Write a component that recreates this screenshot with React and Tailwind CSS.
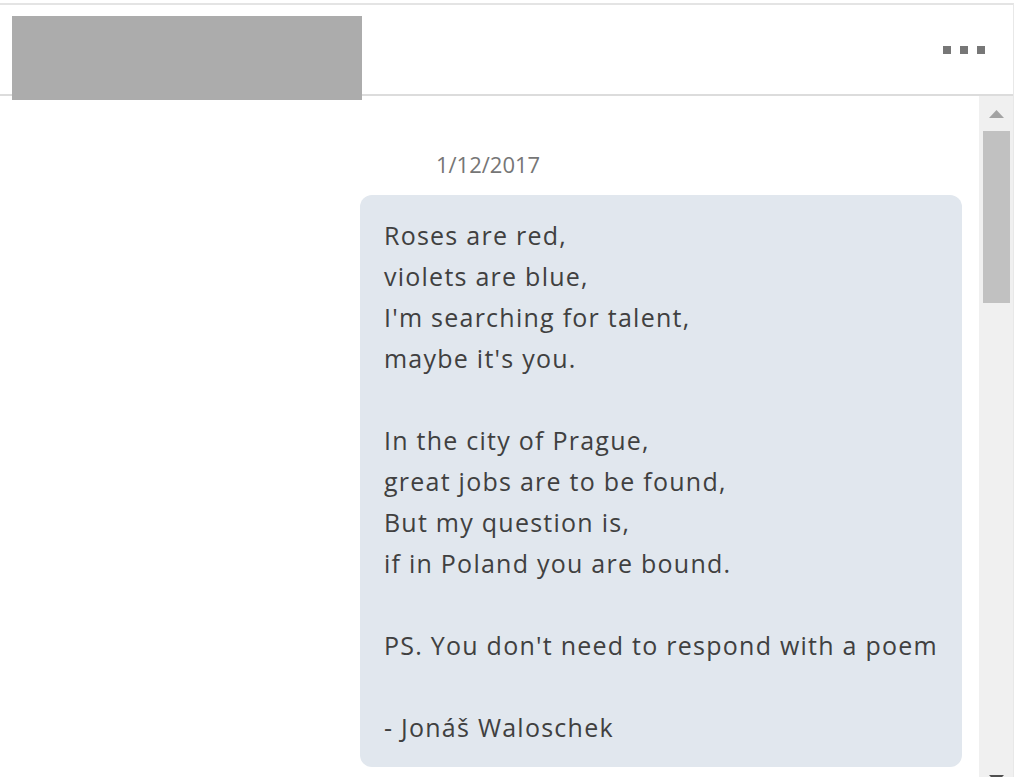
import React from "react";

const poem = `Roses are red,
violets are blue,
I'm searching for talent,
maybe it's you.

In the city of Prague,
great jobs are to be found,
But my question is,
if in Poland you are bound.

PS. You don't need to respond with a poem

- Jonáš Waloschek`;

function Scrollbar() {
  return (
    <div className="w-[34px] bg-[#f0f0f0] flex flex-col items-center">
      <svg width="15" height="8" viewBox="0 0 15 8" className="mt-[14px]">
        <path d="M7.5 0L15 8H0z" fill="#a3a3a3" />
      </svg>
      <div className="mt-[13px] w-[27px] h-[172px] bg-[#c1c1c1]" />
      <div className="flex-1" />
      <svg width="15" height="8" viewBox="0 0 15 8" className="-mb-[6px]">
        <path d="M0 0H15L7.5 8z" fill="#505050" />
      </svg>
    </div>
  );
}

export default function App() {
  return (
    <div
      className="w-[1014px] h-[777px] overflow-hidden bg-white pt-[3px]"
      style={{ fontFamily: '"Open Sans", "Noto Sans", sans-serif' }}
    >
      <div className="h-[774px] flex flex-col border-t-2 border-[#e4e4e4] border-r border-r-[#e8e8e8]">
        <header className="h-[91px] shrink-0 flex items-start justify-between border-b-2 border-[#dcdcdc]">
          <div className="relative z-10 mt-[11px] ml-[12px] w-[350px] h-[84px] bg-[#acacac]" />
          <button className="mt-[41px] mr-[28px] flex gap-[9px]">
            <span className="w-[8px] h-[8px] bg-[#777777]" />
            <span className="w-[8px] h-[8px] bg-[#777777]" />
            <span className="w-[8px] h-[8px] bg-[#777777]" />
          </button>
        </header>
        <div className="flex-1 flex min-h-0">
          <main className="flex-1 flex justify-end pr-[17px]">
            <div className="flex flex-col items-start">
              <div className="mt-[53px] ml-[76px] text-[22px] leading-[30px] text-[#767676]">
                1/12/2017
              </div>
              <div className="mt-[16px] rounded-[12px] bg-[#e1e7ee] pl-[24px] pr-[24px] pt-[20px] pb-[19px] text-[25px] tracking-[1.25px] leading-[41px] text-[#404040] whitespace-pre-line">
                {poem}
              </div>
            </div>
          </main>
          <Scrollbar />
        </div>
      </div>
    </div>
  );
}
